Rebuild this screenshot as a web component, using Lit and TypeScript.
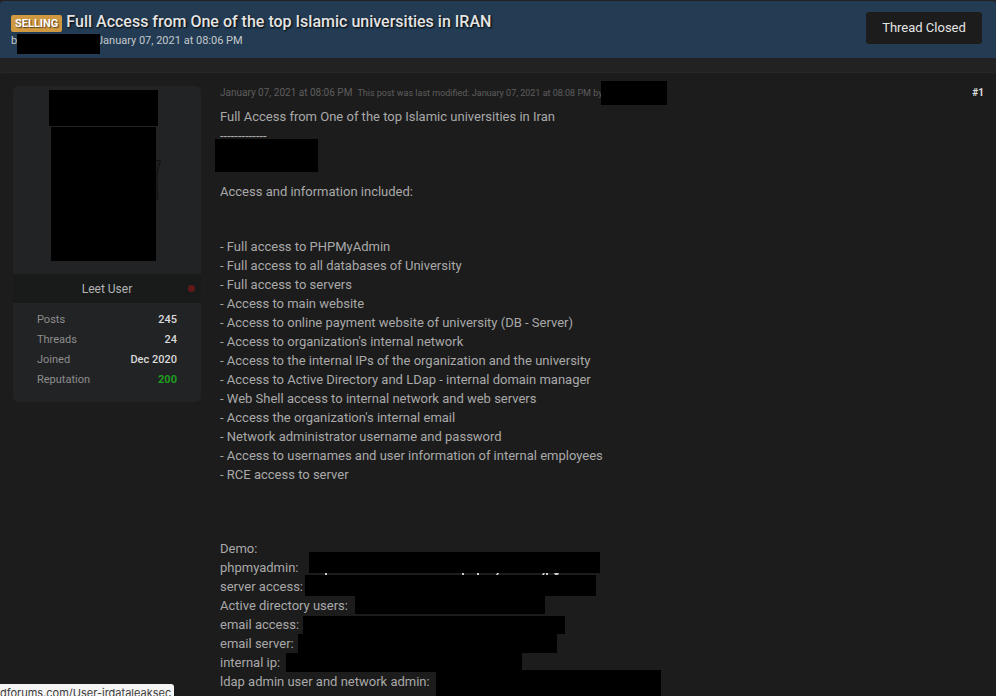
import { LitElement, html, css } from "lit";
import { customElement } from "lit/decorators.js";
import { styleMap } from "lit/directives/style-map.js";

interface Cover {
  left: number;
  top: number;
  width: number;
  height: number;
}

const px = (c: Cover) => ({
  left: `${c.left}px`,
  top: `${c.top}px`,
  width: `${c.width}px`,
  height: `${c.height}px`,
});

const cover = (left: number, top: number, width: number, height: number) =>
  html`<span class="cover" style=${styleMap(px({ left, top, width, height }))}></span>`;

const included = [
  "Full access to PHPMyAdmin",
  "Full access to all databases of University",
  "Full access to servers",
  "Access to main website",
  "Access to online payment website of university (DB - Server)",
  "Access to organization's internal network",
  "Access to the internal IPs of the organization and the university",
  "Access to Active Directory and LDap - internal domain manager",
  "Web Shell access to internal network and web servers",
  "Access the organization's internal email",
  "Network administrator username and password",
  "Access to usernames and user information of internal employees",
  "RCE access to server",
];

const demo: { label: string; cover?: Cover }[] = [
  { label: "Demo:" },
  { label: "phpmyadmin:", cover: { left: 89, top: -6, width: 291, height: 21 } },
  { label: "server access:", cover: { left: 85, top: -2, width: 291, height: 21 } },
  { label: "Active directory users:", cover: { left: 135, top: 0, width: 190, height: 18 } },
  { label: "email access:", cover: { left: 83, top: 1, width: 262, height: 18 } },
  { label: "email server:", cover: { left: 78, top: 0, width: 259, height: 19 } },
  { label: "internal ip:", cover: { left: 66, top: 0, width: 236, height: 19 } },
  { label: "ldap admin user and network admin:", cover: { left: 216, top: -2, width: 225, height: 27 } },
];

const stats = [
  { name: "Posts", value: "245", tone: "" },
  { name: "Threads", value: "24", tone: "" },
  { name: "Joined", value: "Dec 2020", tone: "" },
  { name: "Reputation", value: "200", tone: "good" },
];

@customElement("thread-header")
export class ThreadHeader extends LitElement {
  static styles = css`
    :host {
      display: flex;
      flex-shrink: 0;
      justify-content: space-between;
      align-items: flex-start;
      box-sizing: border-box;
      height: 57px;
      padding: 11px 14px 0 11px;
      background: #243c53;
      border-radius: 4px 4px 0 0;
    }
    .line {
      display: flex;
      align-items: center;
      gap: 4px;
      height: 20px;
    }
    .tag {
      margin-top: 3px;
      padding: 0 4px;
      border-radius: 2px;
      background: #cf9841;
      color: #fff;
      font-size: 11px;
      font-weight: 700;
      line-height: 17px;
      text-shadow: 1px 1px 1px #0009;
    }
    .title {
      margin: 0;
      color: #e4e4e4;
      font-size: 16px;
      font-weight: 500;
      line-height: 20px;
      text-shadow: 1px 1px 2px #000;
    }
    .byline {
      position: relative;
      display: flex;
      margin: 0;
      color: #c3c8cc;
      font-size: 11px;
      line-height: 18px;
    }
    .by {
      width: 86px;
    }
    .cover {
      position: absolute;
      background: #000;
    }
    .closed {
      height: 32px;
      width: 116px;
      padding: 0;
      border: 0;
      border-radius: 3px;
      background: #1c1c1c;
      color: #e4e4e4;
      font: 400 13px/32px Roboto, sans-serif;
    }
  `;
  render() {
    return html`
      <div>
        <div class="line">
          <span class="tag">SELLING</span>
          <h1 class="title">Full Access from One of the top Islamic universities in IRAN</h1>
        </div>
        <p class="byline">
          <span class="by">b</span>
          <span>January 07, 2021 at 08:06 PM</span>
          ${cover(6, 2, 83, 20)}
        </p>
      </div>
      <button class="closed" type="button">Thread Closed</button>
    `;
  }
}

@customElement("author-card")
export class AuthorCard extends LitElement {
  static styles = css`
    :host {
      display: block;
      border-radius: 5px;
      background: #222325;
      overflow: hidden;
    }
    .portrait {
      position: relative;
      height: 188px;
    }
    .cover,
    .sliver {
      position: absolute;
      background: #000;
    }
    .sliver {
      left: 142px;
      top: 73px;
      background: none;
    }
    .rank {
      display: grid;
      grid-template-columns: 1fr auto 1fr;
      align-items: center;
      height: 29px;
      padding-right: 6px;
      padding-left: 6px;
      background: #191b1a;
      color: #b4b4b4;
      font-size: 12px;
    }
    .rank-name {
      grid-column: 2;
    }
    .dot {
      justify-self: end;
      width: 7px;
      height: 7px;
      border-radius: 50%;
      background: #641719;
    }
    .stats {
      display: grid;
      grid-template-columns: auto auto;
      justify-content: space-between;
      margin: 0;
      padding: 7px 24px 12px;
      font-size: 11px;
      line-height: 20px;
    }
    .name {
      color: #8e8e8e;
    }
    .value {
      margin: 0;
      color: #dadada;
      font-weight: 500;
      text-align: right;
    }
    .good {
      color: #1f9d1f;
      font-weight: 700;
    }
  `;
  render() {
    return html`
      <div class="portrait">
        ${cover(36, 4, 109, 36)}
        <svg class="sliver" width="8" height="42" viewBox="0 0 8 42">
          <path d="M0 1.5H5.5L2 14V27L3 40H0Z" fill="#1d1e1f" stroke="#111" stroke-width="1" />
        </svg>
        ${cover(38, 41, 105, 134)}
      </div>
      <div class="rank"><span class="rank-name">Leet User</span><span class="dot"></span></div>
      <dl class="stats">
        ${stats.map(
          (s) => html`<dt class="name">${s.name}</dt>
            <dd class="value ${s.tone}">${s.value}</dd>`,
        )}
      </dl>
    `;
  }
}

@customElement("forum-post")
export class ForumPost extends LitElement {
  static styles = css`
    :host {
      display: block;
      color: #a9a9a9;
      font-size: 13px;
      line-height: 19px;
    }
    .meta {
      position: relative;
      display: flex;
      align-items: center;
      gap: 5px;
      height: 14px;
      margin-bottom: 7px;
      color: #5e5e5e;
      font-size: 10px;
      line-height: 14px;
    }
    .edited {
      font-size: 9px;
    }
    .number {
      margin-left: auto;
      color: #dedede;
      font-weight: 700;
      text-decoration: none;
    }
    .text {
      position: relative;
      margin: 0;
    }
    .gap-line {
      height: 37px;
    }
    .items {
      margin: 36px 0 55px;
      padding: 0;
      list-style: none;
    }
    .item::before {
      content: "- ";
    }
    .row {
      position: relative;
    }
    .cover,
    .remains {
      position: absolute;
      background: #000;
    }
    .remains {
      left: 89px;
      top: 15px;
      background: none;
    }
  `;
  render() {
    return html`
      <div class="meta">
        <time>January 07, 2021 at 08:06 PM</time>
        <span class="edited">This post was last modified: January 07, 2021 at 08:08 PM by</span>
        ${cover(381, -5, 66, 24)}
        <a class="number" href="#1">#1</a>
      </div>
      <p class="text">Full Access from One of the top Islamic universities in Iran</p>
      <p class="text">-------------</p>
      <p class="text gap-line">${cover(-5, -6, 103, 33)}</p>
      <p class="text">Access and information included:</p>
      <ul class="items">
        ${included.map((t) => html`<li class="item">${t}</li>`)}
      </ul>
      ${demo.map(
        (d) => html`<div class="row">
          ${d.label}
          ${d.cover ? cover(d.cover.left, d.cover.top, d.cover.width, d.cover.height) : null}
          ${d.label === "phpmyadmin:"
            ? html`<svg class="remains" width="291" height="2" viewBox="0 0 291 2">
                <path
                  d="M16 0h2v2h-2zM153 0h2v2h-2zM168 0h2v2h-2zM188 0h2l-1 2h-2zM234 0h2l-1 2h-2zM237 0h2v2h-2zM245 0h5l-1 2h-3z"
                  fill="#ccc"
                />
              </svg>`
            : null}
        </div>`,
      )}
    `;
  }
}

@customElement("app-root")
export class AppRoot extends LitElement {
  static styles = css`
    :host {
      display: flex;
      flex-direction: column;
      box-sizing: border-box;
      height: 100vh;
      padding-top: 1px;
      overflow: hidden;
      background: #222;
      font-family: Roboto, sans-serif;
    }
    .thread {
      display: grid;
      grid-template-columns: 188px 1fr;
      gap: 19px;
      align-items: start;
      flex: 1;
      margin-top: 14px;
      padding: 13px 12px 0 13px;
      border-top: 1px solid #272727;
      border-radius: 4px 4px 0 0;
      background: #1c1c1c;
    }
    .status {
      position: fixed;
      left: 0;
      bottom: 0;
      box-sizing: border-box;
      width: 174px;
      height: 12px;
      border-radius: 0 3px 0 0;
      background: #f5f5f5;
      color: #3c3c3c;
      font-family: Inter, sans-serif;
      font-size: 11px;
      line-height: 18px;
      white-space: nowrap;
      overflow: hidden;
    }
  `;
  render() {
    return html`
      <thread-header></thread-header>
      <main class="thread">
        <author-card></author-card>
        <forum-post></forum-post>
      </main>
      <div class="status">dforums.com/User-irdataleaksec</div>
    `;
  }
}
